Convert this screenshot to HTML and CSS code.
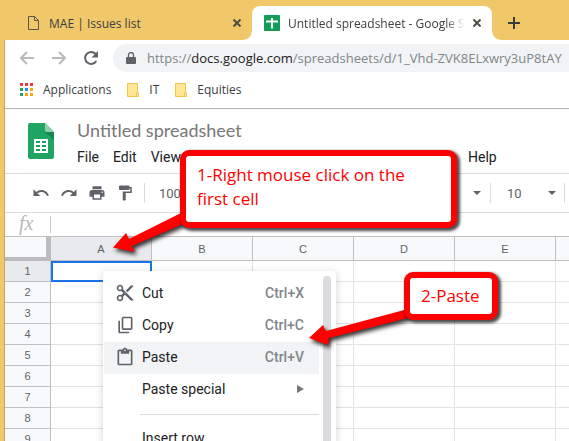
FILE: index.html
```html
<!DOCTYPE html>
<html lang="en">
<head>
<meta charset="utf-8">
<title>Untitled spreadsheet - Google Sheets</title>
<link rel="stylesheet" href="styles.css">
</head>
<body>
<header class="tabs">
  <div class="tab">
    <svg class="tab-icon" viewBox="0 0 16 16" fill="none" stroke="#5a564c"><path d="M3.5 1.5h6l4 4v9h-10zM9.500 1.500v4h4"/></svg>
    <span class="tab-title">MAE | Issues list</span>
    <button class="close" aria-label="Close tab"><svg viewBox="0 0 8 8"><path d="M.5.5l7 7M7.500.500l-7 7"/></svg></button>
  </div>
  <div class="tab active">
    <svg class="tab-icon" viewBox="0 0 16 16"><rect width="16" height="16" rx="1" fill="#0f9d58"/><path d="M2 6.500h12M8 3v10.500" stroke="#fff" stroke-width="2"/></svg>
    <span class="tab-title fade">Untitled spreadsheet - Google Sheets</span>
    <button class="close" aria-label="Close tab"><svg viewBox="0 0 8 8"><path d="M.5.5l7 7M7.500.500l-7 7"/></svg></button>
  </div>
  <button class="new-tab" aria-label="New tab"><svg viewBox="0 0 12 12"><path d="M6 0v12M0 6h12"/></svg></button>
</header>

<main class="window">
  <div class="nav">
    <button class="nav-button dim" aria-label="Back"><svg viewBox="0 0 16 16"><path d="M15 8H2M8 2L2 8l6 6"/></svg></button>
    <button class="nav-button dim" aria-label="Forward"><svg viewBox="0 0 16 16"><path d="M1 8h13M8 2l6 6-6 6"/></svg></button>
    <button class="nav-button" aria-label="Reload"><svg viewBox="0 0 16 16"><path d="M13.300 11A6 6 0 1 1 12.500 3.800L14 5.500"/><path d="M15 1v6.500H8.500z" fill="#5f6368" stroke="none"/></svg></button>
    <div class="omnibox">
      <svg class="lock" viewBox="0 0 10 13"><path d="M1 5h8a1 1 0 0 1 1 1v5a1 1 0 0 1-1 1H1a1 1 0 0 1-1-1V6a1 1 0 0 1 1-1z" fill="#5f6368"/><path d="M2.500 5.500V3a2.500 2.500 0 0 1 5 0v2.500" fill="none" stroke="#5f6368" stroke-width="1.300"/></svg>
      <div class="url" role="textbox" aria-label="Address" contenteditable="true" spellcheck="false">https://<b>docs.google.com</b>/spreadsheets/d/1_Vhd-ZVK8ELxwry3uP8tAY</div>
    </div>
  </div>

  <nav class="bookmarks">
    <a class="bookmark" href="#"><svg class="apps" viewBox="0 0 13 13"><path d="M0 0h3v3H0zM5 0h3v3H5zM10 0h3v3h-3z" fill="#ee3a35"/><path d="M0 5h3v3H0zM0 10h3v3H0z" fill="#26a05a"/><path d="M5 5h3v3H5z" fill="#2b8af0"/><path d="M10 5h3v3h-3zM5 10h3v3H5zM10 10h3v3h-3z" fill="#f7a80f"/></svg>Applications</a>
    <a class="bookmark" href="#"><svg class="folder" viewBox="0 0 12 14"><path d="M.5.5h10v9h1v4H.5z" fill="#ffe793" stroke="#eac54f"/><path d="M9.500 13V9.500h1" fill="none" stroke="#eac54f"/></svg>IT</a>
    <a class="bookmark" href="#"><svg class="folder" viewBox="0 0 12 14"><path d="M.5.5h10v9h1v4H.5z" fill="#ffe793" stroke="#eac54f"/><path d="M9.500 13V9.500h1" fill="none" stroke="#eac54f"/></svg>Equities</a>
  </nav>

  <section class="doc-header">
    <svg class="logo" viewBox="0 0 26 36"><path d="M2 0h15l9 9v25a2 2 0 0 1-2 2H2a2 2 0 0 1-2-2V2a2 2 0 0 1 2-2z" fill="#1fa463"/><path d="M17 9h9v8z" fill="#15864f"/><path d="M17 0l9 9h-7a2 2 0 0 1-2-2z" fill="#8ed1b1"/><path d="M6 16h14v14H6z" fill="#fff"/><path d="M8 18h4v2H8zM14 18h4v2h-4zM8 22h4v2H8zM14 22h4v2h-4zM8 26h4v2H8zM14 26h4v2h-4z" fill="#17a05d"/></svg>
    <div class="doc-info">
      <input class="doc-title" aria-label="Document name" value="Untitled spreadsheet">
      <div class="menubar">
        <button>File</button><button>Edit</button><button>View</button><button class="help">Help</button>
      </div>
    </div>
  </section>

  <div class="toolbar">
    <button class="tool" aria-label="Undo"><svg viewBox="0 0 24 24"><path d="M12.500 8c-2.650 0-5.050.990-6.900 2.600L2 7v9h9l-3.620-3.620c1.390-1.160 3.160-1.880 5.120-1.880 3.540 0 6.550 2.310 7.600 5.500l2.370-.780C21.080 11.030 17.150 8 12.500 8z"/></svg></button>
    <button class="tool" aria-label="Redo"><svg viewBox="0 0 24 24"><path d="M18.400 10.600C16.550 8.990 14.150 8 11.500 8c-4.650 0-8.580 3.030-9.960 7.220L3.900 16c1.050-3.190 4.050-5.500 7.600-5.500 1.950 0 3.730.720 5.120 1.880L13 16h9V7l-3.600 3.600z"/></svg></button>
    <button class="tool" aria-label="Print"><svg viewBox="0 0 24 24"><path d="M19 8H5c-1.660 0-3 1.340-3 3v6h4v4h12v-4h4v-6c0-1.660-1.340-3-3-3zm-3 11H8v-5h8v5zm3-7c-.550 0-1-.450-1-1s.450-1 1-1 1 .450 1 1-.450 1-1 1zm-1-9H6v4h12V3z"/></svg></button>
    <button class="tool" aria-label="Paint format"><svg viewBox="0 0 24 24"><path d="M18 4V3c0-.550-.450-1-1-1H5c-.550 0-1 .450-1 1v4c0 .550.450 1 1 1h12c.550 0 1-.450 1-1V6h1v4H9v11c0 .550.450 1 1 1h2c.550 0 1-.450 1-1v-9h8V4h-3z"/></svg></button>
    <span class="divider"></span>
    <button class="zoom">100</button>
    <button class="font" aria-label="Font"><i class="caret"></i></button>
    <span class="divider"></span>
    <button class="size">10<i class="caret"></i></button>
    <span class="divider"></span>
  </div>

  <div class="formula"><span class="fx">fx</span></div>

  <div class="grid-area">
    <table class="grid">
      <thead><tr><th class="corner"></th><th class="selected">A</th><th>B</th><th>C</th><th>D</th><th>E</th><th></th></tr></thead>
      <tbody>
        <tr><th class="selected">1</th><td class="current"></td><td></td><td></td><td></td><td></td><td></td></tr>
        <tr><th>2</th><td></td><td></td><td></td><td></td><td></td><td></td></tr>
        <tr><th>3</th><td></td><td></td><td></td><td></td><td></td><td></td></tr>
        <tr><th>4</th><td></td><td></td><td></td><td></td><td></td><td></td></tr>
        <tr><th>5</th><td></td><td></td><td></td><td></td><td></td><td></td></tr>
        <tr><th>6</th><td></td><td></td><td></td><td></td><td></td><td></td></tr>
        <tr><th>7</th><td></td><td></td><td></td><td></td><td></td><td></td></tr>
        <tr><th>8</th><td></td><td></td><td></td><td></td><td></td><td></td></tr>
        <tr><th>9</th><td></td><td></td><td></td><td></td><td></td><td></td></tr>
      </tbody>
    </table>
  </div>
</main>

<div class="context-menu">
  <div class="items">
    <button class="item"><svg viewBox="0 0 24 24"><path d="M9.640 7.640c.230-.500.360-1.050.360-1.640 0-2.210-1.790-4-4-4S2 3.790 2 6s1.790 4 4 4c.590 0 1.140-.130 1.640-.360L10 12l-2.360 2.360C7.140 14.130 6.590 14 6 14c-2.210 0-4 1.790-4 4s1.790 4 4 4 4-1.790 4-4c0-.590-.130-1.140-.360-1.640L12 14l7 7h3v-1L9.640 7.640zM6 8c-1.100 0-2-.890-2-2s.900-2 2-2 2 .890 2 2-.900 2-2 2zm0 12c-1.100 0-2-.890-2-2s.900-2 2-2 2 .890 2 2-.900 2-2 2zm6-7.500c-.280 0-.500-.220-.500-.500s.220-.500.500-.500.500.220.500.500-.220.500-.500.500zM19 3l-6 6 2 2 7-7V3z"/></svg><span>Cut</span><kbd>Ctrl+X</kbd></button>
    <button class="item"><svg viewBox="0 0 24 24"><path d="M19 2H10c-1.100 0-2 .900-2 2v12c0 1.100.900 2 2 2h9c1.100 0 2-.900 2-2V4c0-1.100-.900-2-2-2zm0 14h-9V4h9v12zM4 7v13c0 1.100.900 2 2 2h11v-2H6V7H4z"/></svg><span>Copy</span><kbd>Ctrl+C</kbd></button>
    <button class="item hover"><svg viewBox="0 0 24 24"><path d="M19 3h-4.180C14.400 1.840 13.300 1 12 1s-2.400.840-2.820 2H5c-1.100 0-2 .900-2 2v15c0 1.100.900 2 2 2h14c1.100 0 2-.900 2-2V5c0-1.100-.900-2-2-2zm-7 0c.550 0 1 .450 1 1s-.450 1-1 1-1-.450-1-1 .450-1 1-1zm7 17H5V5h2v3h10V5h2v15z"/></svg><span>Paste</span><kbd>Ctrl+V</kbd></button>
    <button class="item"><span class="no-icon">Paste special</span><i class="submenu"></i></button>
    <hr>
    <button class="item"><span class="no-icon">Insert row</span></button>
  </div>
  <div class="scrollbar"></div>
</div>

<svg class="arrows" viewBox="0 0 569 441" width="569" height="441" fill="#f00">
  <path d="M113 247.500L126 233l3 6 54-27v12l-51 22 3 6z"/>
  <path d="M309 338l14-13 3 6 82-22v9l-79 20-1 7z"/>
</svg>
<aside class="callout first">1-Right mouse click on the first cell</aside>
<aside class="callout second">2-Paste</aside>
</body>
</html>
```

FILE: styles.css
```css
* { box-sizing: border-box; }

body {
  margin: 0;
  height: 100vh;
  overflow: hidden;
  position: relative;
  display: flex;
  flex-direction: column;
  background: #f0c869;
  font-family: "Open Sans", "Noto Sans", sans-serif;
  font-size: 12px;
  color: #3c4043;
}

button {
  border: 0;
  padding: 0;
  background: none;
  font: inherit;
  color: inherit;
  display: flex;
  align-items: center;
}

svg { display: block; flex: none; }

/* Browser tabs */
.tabs {
  height: 40px;
  flex: none;
  display: flex;
  align-items: flex-end;
  padding-left: 13px;
}
.tab {
  position: relative;
  width: 239px;
  height: 34px;
  flex: none;
  display: flex;
  align-items: center;
  gap: 8px;
  padding: 0 11px 0 12px;
}
.tab.active {
  width: 240px;
  background: #fff;
  border-radius: 8px 8px 0 0;
}
.tab.active::before,
.tab.active::after {
  content: "";
  position: absolute;
  bottom: 0;
  width: 8px;
  height: 8px;
}
.tab.active::before {
  right: 100%;
  background: radial-gradient(circle at 0 0, transparent 7px, #fff 8px);
}
.tab.active::after {
  left: 100%;
  background: radial-gradient(circle at 100% 0, transparent 7px, #fff 8px);
}
.tab-icon { width: 16px; height: 16px; }
.tab-title {
  flex: 1;
  min-width: 0;
  overflow: hidden;
  white-space: nowrap;
}
.fade {
  -webkit-mask-image: linear-gradient(to left, transparent, #000 20px);
  mask-image: linear-gradient(to left, transparent, #000 20px);
}
.close svg { width: 8px; height: 8px; stroke: #504c42; stroke-width: 2; }
.new-tab { height: 34px; margin-left: 16px; }
.new-tab svg { width: 12px; height: 12px; stroke: #3c3c3c; stroke-width: 2; }

/* Browser window */
.window {
  flex: 1;
  min-height: 0;
  margin-left: 4px;
  border-left: 1px solid #c9a75a;
  background: #fff;
  overflow: hidden;
}
.nav {
  height: 36px;
  display: flex;
  align-items: center;
  padding-left: 14px;
}
.nav-button { width: 16px; margin-right: 16px; }
.nav-button svg {
  width: 16px;
  height: 16px;
  fill: none;
  stroke: #5f6368;
  stroke-width: 2;
}
.nav-button.dim svg { stroke: #b8babd; }
.omnibox {
  flex: 1;
  min-width: 0;
  height: 28px;
  margin-left: -2px;
  display: flex;
  align-items: center;
  gap: 11px;
  padding-left: 13px;
  border-radius: 14px 0 0 14px;
  background: #f1f3f4;
}
.lock { width: 10px; height: 13px; }
.url {
  flex: 1;
  min-width: 0;
  overflow: hidden;
  white-space: nowrap;
  font-size: 13px;
  color: #80868b;
}
.url b { font-weight: 400; color: #202124; }

.bookmarks {
  height: 33px;
  display: flex;
  align-items: center;
  gap: 16px;
  padding: 0 0 5px 15px;
  border-bottom: 1px solid #b4b4b4;
}
.bookmark {
  display: flex;
  align-items: center;
  gap: 10px;
  color: inherit;
  text-decoration: none;
}
.apps { width: 13px; height: 13px; }
.folder { width: 12px; height: 14px; }

/* Document header */
.doc-header {
  height: 64px;
  display: flex;
  gap: 23px;
  padding: 14px 0 0 23px;
}
.logo { width: 26px; height: 36px; }
.doc-info { flex: 1; min-width: 0; }
.doc-title {
  display: block;
  width: 200px;
  height: 20px;
  margin-top: -3px;
  padding: 0;
  border: 0;
  background: none;
  font-family: Lato, sans-serif;
  font-size: 18px;
  color: #777;
}
.menubar {
  display: flex;
  gap: 14px;
  padding-top: 9px;
  font-family: Roboto, sans-serif;
  font-size: 14px;
  line-height: 16px;
  color: #202124;
}
.help { margin-left: 273px; }

/* Formatting toolbar */
.toolbar {
  height: 40px;
  display: flex;
  align-items: center;
  padding-left: 27px;
  border-top: 1px solid #dadce0;
  border-bottom: 1px solid #dadce0;
  font-family: Roboto, sans-serif;
  font-size: 13px;
  color: #5f6368;
}
.toolbar > * { flex: none; }
.tool { margin-right: 10px; }
.tool svg { width: 18px; height: 18px; fill: #5f6368; }
.divider { width: 1px; height: 20px; background: #dadce0; }
.zoom { margin-left: 14px; width: 24px; }
.font { width: 307px; justify-content: flex-end; padding-right: 9px; }
.size { width: 73px; justify-content: space-between; padding: 0 8px 0 16px; }
.caret {
  border: 4px solid transparent;
  border-top-color: #5f6368;
  border-bottom: 0;
}

.formula {
  height: 23px;
  display: flex;
  align-items: center;
}
.fx {
  width: 46px;
  height: 17px;
  padding-left: 14px;
  border-right: 1px solid #c8c8c8;
  font: italic 20px/15px "Liberation Serif", serif;
  color: #b8b8b8;
}

/* Spreadsheet grid */
.grid-area { overflow: hidden; border-top: 1px solid #c0c0c0; }
.grid {
  width: 652px;
  table-layout: fixed;
  border-collapse: separate;
  border-spacing: 0;
  font-family: "Liberation Sans", sans-serif;
  font-size: 11px;
}
.grid th, .grid td { padding: 0; height: 21px; }
.grid th {
  border-right: 1px solid #c0c0c0;
  border-bottom: 1px solid #c0c0c0;
  background: #f8f9fa;
  font-weight: 400;
  line-height: 16px;
  color: #5f6368;
}
.grid thead th { height: 24px; }
.grid th.selected { background: #e8eaed; }
.grid thead th.corner {
  width: 46px;
  border-right: 5px solid #bcbcbc;
  border-bottom: 4px solid #bcbcbc;
}
.grid td { border-right: 1px solid #e2e3e3; border-bottom: 1px solid #e2e3e3; }
.grid td.current { border: 0; box-shadow: inset 0 0 0 2px #1a73e8; }

/* Context menu */
.context-menu {
  position: absolute;
  left: 103px;
  top: 271px;
  bottom: -8px;
  width: 233px;
  display: flex;
  gap: 4px;
  padding: 5px 5px 0 1px;
  overflow: hidden;
  background: #fff;
  border-radius: 4px;
  box-shadow: 0 2px 6px 2px rgba(60, 64, 67, .15);
  font-family: Roboto, sans-serif;
  font-size: 14px;
  color: #202124;
}
.items { flex: 1; padding-top: 2px; }
.item {
  width: 100%;
  height: 32px;
  padding: 0 15px 2px 11px;
  text-align: left;
}
.item svg { width: 20px; height: 20px; fill: #5f6368; margin-right: 7px; }
.item span { flex: 1; }
.item .no-icon { padding-left: 27px; }
.item kbd { font: inherit; font-weight: 500; color: #80868b; }
.hover { background: #f1f3f4; }
.submenu {
  border: 4px solid transparent;
  border-left: 7px solid #757575;
  border-right: 0;
}
hr { margin: 8px 0 8px 36px; border: 0; border-top: 1px solid #dadce0; }
.scrollbar { width: 8px; border-radius: 4px; background: #dadce0; }

/* Annotations */
.arrows {
  position: absolute;
  left: 0;
  top: 0;
  filter: drop-shadow(2px 3px 2px rgba(0, 0, 0, .8));
}
.callout {
  position: absolute;
  border: 6px solid #f00;
  border-radius: 9px;
  background: #fff;
  box-shadow: 2px 2px 3px 1px rgba(0, 0, 0, .7);
  font-size: 17px;
  line-height: 24px;
  color: #f00;
}
.first { left: 180px; top: 150px; width: 277px; height: 78px; padding: 7px 30px 7px 11px; }
.second { left: 404px; top: 272px; width: 94px; height: 48px; padding: 6px 11px; white-space: nowrap; }
```
